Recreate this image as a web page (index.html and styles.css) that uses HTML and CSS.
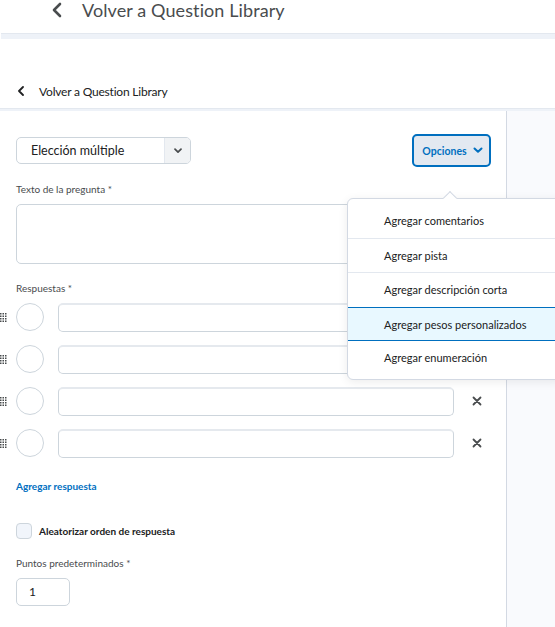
FILE: index.html
```html
<!DOCTYPE html>
<html lang="es">
<head>
<meta charset="utf-8">
<title>Volver a Question Library</title>
<link rel="stylesheet" href="styles.css">
</head>
<body>
<header class="topbar">
  <svg class="chev-big" width="12" height="16" viewBox="0 0 12 16"><path d="M9 2 L3 8 L9 14" fill="none" stroke="#494c4e" stroke-width="2.6" stroke-linecap="round" stroke-linejoin="round"/></svg>
  <span class="top-title">Volver a Question Library</span>
</header>
<div class="band"></div>
<div class="spacer"></div>
<nav class="nav">
  <svg class="chev-small" width="8" height="10" viewBox="0 0 8 10"><path d="M6 1 L2 5 L6 9" fill="none" stroke="#202122" stroke-width="1.8" stroke-linecap="round" stroke-linejoin="round"/></svg>
  <span class="nav-title">Volver a Question Library</span>
</nav>
<div class="divider"></div>
<main class="main">
  <section class="editor">
    <div class="toprow">
      <div class="select">
        <span class="select-text">Elección múltiple</span>
        <span class="select-btn">
          <svg width="10" height="6" viewBox="0 0 10 6"><path d="M2 1.2 L5 4.2 L8 1.2" fill="none" stroke="#494c4e" stroke-width="1.7" stroke-linecap="round" stroke-linejoin="round"/></svg>
        </span>
      </div>
      <button class="opciones">Opciones
        <svg width="10" height="7" viewBox="0 0 10 7"><path d="M1.5 1.5 L5 4.8 L8.5 1.5" fill="none" stroke="#006fbf" stroke-width="2" stroke-linecap="round" stroke-linejoin="round"/></svg>
      </button>
    </div>
    <label class="label l-question">Texto de la pregunta *</label>
    <div class="textarea"></div>
    <label class="label l-answers">Respuestas *</label>
    <div class="answers">
      <div class="answer">
        <svg class="grip" width="7" height="9" viewBox="0 0 7 9"><g fill="#494c4e"><rect x="0" y="0" width="1.5" height="1.5"/><rect x="2.5" y="0" width="1.5" height="1.5"/><rect x="5" y="0" width="1.5" height="1.5"/><rect x="0" y="2.5" width="1.5" height="1.5"/><rect x="2.5" y="2.5" width="1.5" height="1.5"/><rect x="5" y="2.5" width="1.5" height="1.5"/><rect x="0" y="5" width="1.5" height="1.5"/><rect x="2.5" y="5" width="1.5" height="1.5"/><rect x="5" y="5" width="1.5" height="1.5"/><rect x="0" y="7.5" width="1.5" height="1.5"/><rect x="2.5" y="7.5" width="1.5" height="1.5"/><rect x="5" y="7.5" width="1.5" height="1.5"/></g></svg>
        <span class="radio"></span>
        <span class="input"></span>
        <span class="remove"></span>
      </div>
      <div class="answer">
        <svg class="grip" width="7" height="9" viewBox="0 0 7 9"><g fill="#494c4e"><rect x="0" y="0" width="1.5" height="1.5"/><rect x="2.5" y="0" width="1.5" height="1.5"/><rect x="5" y="0" width="1.5" height="1.5"/><rect x="0" y="2.5" width="1.5" height="1.5"/><rect x="2.5" y="2.5" width="1.5" height="1.5"/><rect x="5" y="2.5" width="1.5" height="1.5"/><rect x="0" y="5" width="1.5" height="1.5"/><rect x="2.5" y="5" width="1.5" height="1.5"/><rect x="5" y="5" width="1.5" height="1.5"/><rect x="0" y="7.5" width="1.5" height="1.5"/><rect x="2.5" y="7.5" width="1.5" height="1.5"/><rect x="5" y="7.5" width="1.5" height="1.5"/></g></svg>
        <span class="radio"></span>
        <span class="input"></span>
        <span class="remove"></span>
      </div>
      <div class="answer">
        <svg class="grip" width="7" height="9" viewBox="0 0 7 9"><g fill="#494c4e"><rect x="0" y="0" width="1.5" height="1.5"/><rect x="2.5" y="0" width="1.5" height="1.5"/><rect x="5" y="0" width="1.5" height="1.5"/><rect x="0" y="2.5" width="1.5" height="1.5"/><rect x="2.5" y="2.5" width="1.5" height="1.5"/><rect x="5" y="2.5" width="1.5" height="1.5"/><rect x="0" y="5" width="1.5" height="1.5"/><rect x="2.5" y="5" width="1.5" height="1.5"/><rect x="5" y="5" width="1.5" height="1.5"/><rect x="0" y="7.5" width="1.5" height="1.5"/><rect x="2.5" y="7.5" width="1.5" height="1.5"/><rect x="5" y="7.5" width="1.5" height="1.5"/></g></svg>
        <span class="radio"></span>
        <span class="input"></span>
        <span class="remove"><svg width="10" height="10" viewBox="0 0 10 10"><path d="M1.5 1.5 L8.5 8.5 M8.5 1.5 L1.5 8.5" stroke="#494c4e" stroke-width="1.8" stroke-linecap="round"/></svg></span>
      </div>
      <div class="answer">
        <svg class="grip" width="7" height="9" viewBox="0 0 7 9"><g fill="#494c4e"><rect x="0" y="0" width="1.5" height="1.5"/><rect x="2.5" y="0" width="1.5" height="1.5"/><rect x="5" y="0" width="1.5" height="1.5"/><rect x="0" y="2.5" width="1.5" height="1.5"/><rect x="2.5" y="2.5" width="1.5" height="1.5"/><rect x="5" y="2.5" width="1.5" height="1.5"/><rect x="0" y="5" width="1.5" height="1.5"/><rect x="2.5" y="5" width="1.5" height="1.5"/><rect x="5" y="5" width="1.5" height="1.5"/><rect x="0" y="7.5" width="1.5" height="1.5"/><rect x="2.5" y="7.5" width="1.5" height="1.5"/><rect x="5" y="7.5" width="1.5" height="1.5"/></g></svg>
        <span class="radio"></span>
        <span class="input"></span>
        <span class="remove"><svg width="10" height="10" viewBox="0 0 10 10"><path d="M1.5 1.5 L8.5 8.5 M8.5 1.5 L1.5 8.5" stroke="#494c4e" stroke-width="1.8" stroke-linecap="round"/></svg></span>
      </div>
    </div>
    <a class="add-answer">Agregar respuesta</a>
    <div class="checkrow">
      <span class="checkbox"></span>
      <span class="check-label">Aleatorizar orden de respuesta</span>
    </div>
    <label class="label l-points">Puntos predeterminados *</label>
    <div class="points">1</div>
  </section>
  <aside class="side"></aside>
</main>

<div class="menu">
  <span class="menu-arrow"></span>
  <div class="menu-item">Agregar comentarios</div>
  <div class="menu-item">Agregar pista</div>
  <div class="menu-item">Agregar descripción corta</div>
  <div class="menu-item active">Agregar pesos personalizados</div>
  <div class="menu-item last">Agregar enumeración</div>
</div>
</body>
</html>
```

FILE: styles.css
```css
* { box-sizing: border-box; }
html, body { margin: 0; padding: 0; }
body {
  width: 555px;
  height: 627px;
  overflow: hidden;
  position: relative;
  background: #ffffff;
  font-family: Lato, "Open Sans", sans-serif;
  color: #494c4e;
}

.topbar {
  height: 33px;
  display: flex;
  align-items: center;
  padding-left: 51px;
  padding-bottom: 13px;
}
.chev-big { margin-right: 19px; }
.top-title { font-size: 18px; color: #494c4e; letter-spacing: 0.1px; }

.band {
  height: 6px;
  margin-left: 1px;
  background: #eef2f8;
  border-top: 1px solid #e3e8ef;
}
.spacer { height: 41px; }

.nav {
  height: 28px;
  display: flex;
  align-items: center;
  padding-left: 16px;
  padding-bottom: 6px;
}
.chev-small { margin-right: 14px; margin-left: 1px; }
.nav-title { font-size: 12px; color: #202122; letter-spacing: -0.2px; }

.divider {
  height: 3px;
  background: #eef2f8;
  border-top: 1px solid #e3e8ef;
}

.main {
  display: flex;
  height: 517px;
}
.editor {
  width: 507px;
  padding: 23px 0 0 16px;
  border-right: 1px solid #d3d9e3;
}
.side { flex: 1; background: #f9fafd; }

.toprow {
  display: flex;
  align-items: center;
  justify-content: space-between;
  width: 475px;
}
.select {
  width: 175px;
  height: 27px;
  border: 1px solid #cdd5dc;
  border-radius: 5px;
  display: flex;
  overflow: hidden;
}
.select-text {
  flex: 1;
  font-size: 12.5px;
  color: #202122;
  padding-left: 14px;
  line-height: 25px;
}
.select-btn {
  width: 26px;
  background: #f1f3f5;
  border-left: 1px solid #e3e8ef;
  display: flex;
  align-items: center;
  justify-content: center;
}
.opciones {
  width: 79px;
  height: 33px;
  border: 2px solid #006fbf;
  border-radius: 5px;
  background: #e3e9f1;
  color: #006fbf;
  font-family: Lato, sans-serif;
  font-size: 10.5px;
  font-weight: 700;
  display: flex;
  align-items: center;
  justify-content: center;
  gap: 6px;
  padding: 0 0 0 2px;
}

.label {
  display: block;
  font-size: 10px;
  color: #494c4e;
  line-height: 14px;
}
.l-question { margin-top: 15px; }
.textarea {
  margin-top: 8px;
  width: 475px;
  height: 60px;
  border: 1px solid #cdd5dc;
  border-radius: 5px;
}
.l-answers { margin-top: 17px; }

.answers { margin-top: 8px; margin-left: -16px; }
.answer {
  display: flex;
  align-items: center;
  height: 28px;
  margin-bottom: 14px;
}
.grip { margin-left: 0; margin-right: 9px; }
.radio {
  width: 28px;
  height: 28px;
  border-radius: 50%;
  border: 1px solid #cdd5dc;
}
.input {
  margin-left: 14px;
  width: 396px;
  height: 29px;
  border: 1px solid #cdd5dc;
  border-top: 2px solid #e5e9ee;
  border-radius: 5px;
}
.remove {
  width: 46px;
  display: flex;
  justify-content: center;
}

.add-answer {
  display: block;
  margin-top: 22px;
  font-size: 10px;
  font-weight: 700;
  color: #006fbf;
  line-height: 14px;
}
.checkrow {
  display: flex;
  align-items: center;
  margin-top: 30px;
}
.checkbox {
  width: 16px;
  height: 16px;
  border: 1px solid #cdd5dc;
  border-radius: 4px;
  background: #f1f5fb;
  margin-right: 7px;
}
.check-label { font-size: 10px; font-weight: 700; color: #202122; }
.l-points { margin-top: 17px; }
.points {
  margin-top: 8px;
  width: 54px;
  height: 28px;
  border: 1px solid #cdd5dc;
  border-radius: 5px;
  font-size: 12px;
  color: #202122;
  line-height: 26px;
  padding-left: 12px;
}

.menu {
  position: absolute;
  left: 347px;
  top: 198px;
  width: 216px;
  background: #ffffff;
  border: 1px solid #d3d9e3;
  border-radius: 6px;
  box-shadow: 0 2px 10px rgba(0, 0, 0, 0.08);
  padding-top: 5px;
}
.menu-arrow {
  position: absolute;
  left: 97px;
  top: -6px;
  width: 10px;
  height: 10px;
  background: #fff;
  border-top: 1px solid #d3d9e3;
  border-left: 1px solid #d3d9e3;
  transform: rotate(45deg);
}
.menu-item {
  height: 34.6px;
  line-height: 34px;
  padding-left: 36px;
  font-size: 11px;
  color: #202122;
  border-bottom: 1px solid #e3e8ef;
}
.menu-item.active {
  background: #e8f8ff;
  border-top: 1px solid #006fbf;
  border-bottom: 1px solid #006fbf;
  margin-top: -1px;
}
.menu-item.last { border-bottom: none; height: 38px; }
```
